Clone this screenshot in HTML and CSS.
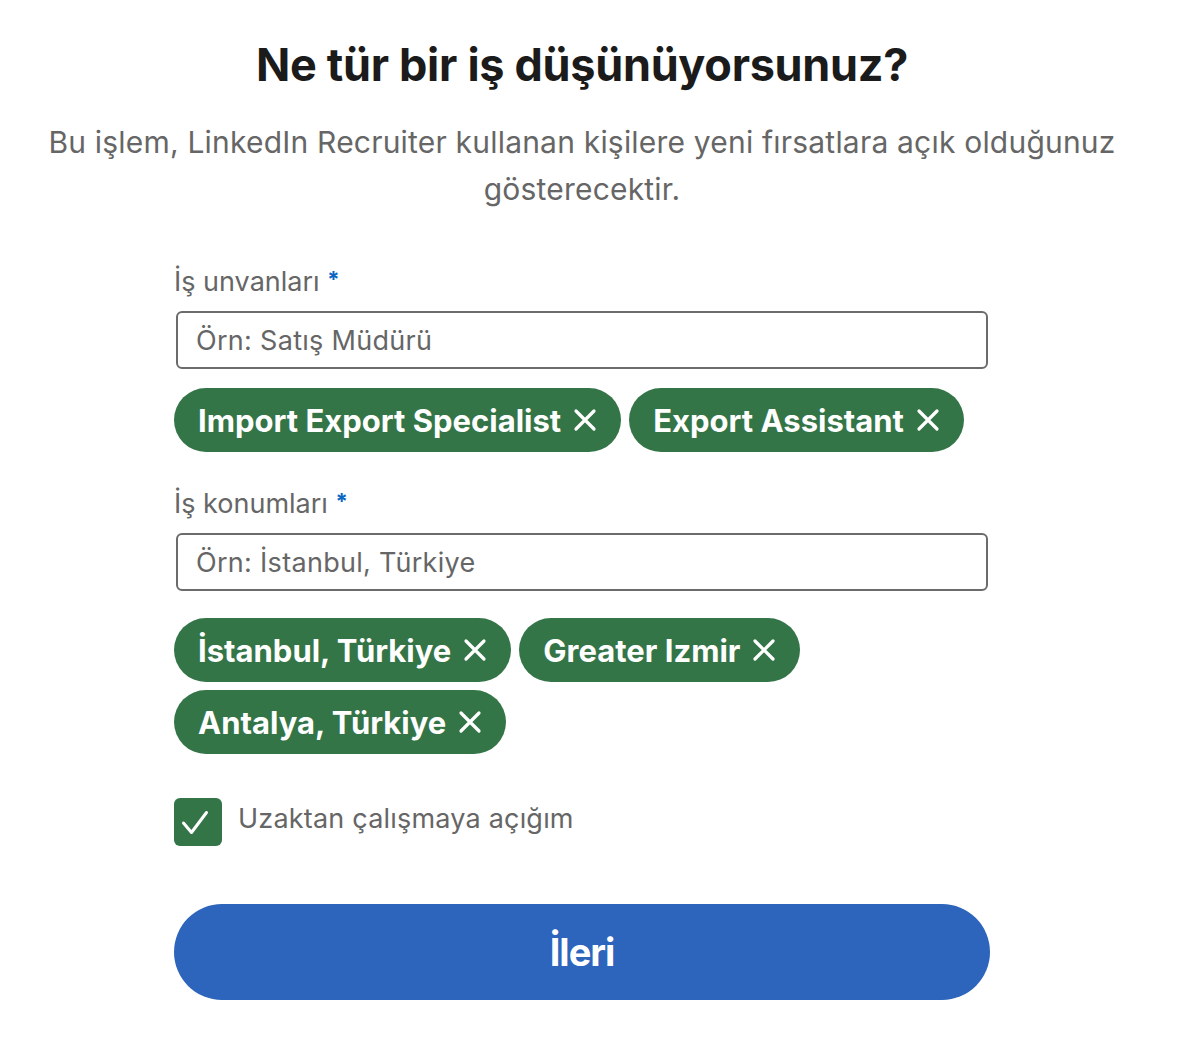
FILE: index.html
```html
<!DOCTYPE html>
<html lang="tr">
<head>
<meta charset="utf-8">
<link rel="stylesheet" href="styles.css">
</head>
<body>
<main class="page">
  <h1 class="title">Ne tür bir iş düşünüyorsunuz?</h1>
  <p class="subtitle">Bu işlem, LinkedIn Recruiter kullanan kişilere yeni fırsatlara açık olduğunuz gösterecektir.</p>
  <form class="form">
    <label class="label label-first">İş unvanları <span class="req">*</span></label>
    <div class="input">Örn: Satış Müdürü</div>
    <div class="pills pills-first">
      <span class="pill">Import Export Specialist <svg class="x" viewBox="0 0 24 24"><path d="M3 3 L21 21 M21 3 L3 21"/></svg></span>
      <span class="pill">Export Assistant <svg class="x" viewBox="0 0 24 24"><path d="M3 3 L21 21 M21 3 L3 21"/></svg></span>
    </div>
    <label class="label label-second">İş konumları <span class="req">*</span></label>
    <div class="input">Örn: İstanbul, Türkiye</div>
    <div class="pills pills-second">
      <span class="pill">İstanbul, Türkiye <svg class="x" viewBox="0 0 24 24"><path d="M3 3 L21 21 M21 3 L3 21"/></svg></span>
      <span class="pill">Greater Izmir <svg class="x" viewBox="0 0 24 24"><path d="M3 3 L21 21 M21 3 L3 21"/></svg></span>
      <span class="pill">Antalya, Türkiye <svg class="x" viewBox="0 0 24 24"><path d="M3 3 L21 21 M21 3 L3 21"/></svg></span>
    </div>
    <div class="check-row">
      <span class="checkbox"><svg viewBox="0 0 48 48"><path d="M9.5 25 L17.5 34.5 L32.5 14.5"/></svg></span>
      <span class="check-label">Uzaktan çalışmaya açığım</span>
    </div>
    <button type="button" class="next">İleri</button>
  </form>
</main>
</body>
</html>
```

FILE: styles.css
```css
* { box-sizing: border-box; }
html, body { margin: 0; padding: 0; background: #fff; }
body {
  font-family: Inter, "Noto Sans", "Liberation Sans", sans-serif;
  color: rgba(0,0,0,0.9);
}
.page {
  width: 1164px;
  padding-top: 35px;
}
.title {
  margin: 0;
  text-align: center;
  font-size: 45px;
  line-height: 60px;
  font-weight: 700;
  color: #1b1b1b;
  letter-spacing: -0.3px;
}
.subtitle {
  margin: 24px 0 0;
  padding: 0 20px;
  text-align: center;
  font-size: 30px;
  line-height: 47px;
  color: #666666;
  letter-spacing: 0.2px;
}
.form {
  width: 816px;
  margin: 0 auto;
  display: flex;
  flex-direction: column;
}
.label {
  font-size: 27px;
  line-height: 36px;
  color: #666666;
}
.label-first { margin-top: 48px; }
.label-second { margin-top: 31px; }
.req { color: #0a66c2; font-weight: 700; font-size: 22px; vertical-align: 4px; }
.input {
  margin: 11px 2px 0;
  height: 58px;
  border: 2px solid #6b6b6b;
  border-radius: 6px;
  padding: 0 18px;
  display: flex;
  align-items: center;
  font-size: 27px;
  letter-spacing: 0.3px;
  color: #666666;
}
.pills {
  display: flex;
  flex-wrap: wrap;
  gap: 8px;
}
.pills-first { margin-top: 19px; }
.pills-second { margin-top: 27px; }
.pill {
  height: 64px;
  border-radius: 32px;
  background: #347548;
  color: #fff;
  font-size: 31px;
  font-weight: 700;
  display: inline-flex;
  align-items: center;
  gap: 12px;
  padding: 0 24px;
}
.x {
  width: 24px;
  height: 24px;
  fill: none;
  stroke: #fff;
  stroke-width: 3.2;
  stroke-linecap: round;
}
.check-row {
  margin-top: 44px;
  display: flex;
  align-items: center;
  gap: 16px;
}
.checkbox {
  width: 48px;
  height: 48px;
  border-radius: 6px;
  background: #347548;
  display: block;
}
.checkbox svg {
  width: 48px;
  height: 48px;
  display: block;
  fill: none;
  stroke: #fff;
  stroke-width: 3;
  stroke-linecap: round;
  stroke-linejoin: round;
}
.check-label {
  font-size: 27px;
  letter-spacing: 0.2px;
  color: #666666;
  margin-bottom: 7px;
}
.next {
  margin-top: 58px;
  height: 96px;
  border: none;
  border-radius: 48px;
  background: #2d64bc;
  color: #fff;
  font-family: inherit;
  font-size: 38px;
  font-weight: 700;
  letter-spacing: -1px;
}
```
